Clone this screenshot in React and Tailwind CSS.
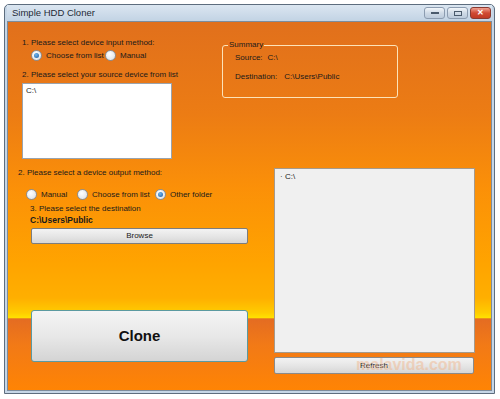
import React from 'react'

const Radio = ({ checked, label, w }) => (
  <div className={`flex items-center gap-[4px] ${w || ''}`}>
    <span className="flex h-[11px] w-[11px] shrink-0 items-center justify-center rounded-full border border-[#8a8f96] bg-[radial-gradient(circle_at_40%_35%,#ffffff,#d8dde2)]">
      {checked && <span className="h-[5px] w-[5px] rounded-full bg-[radial-gradient(circle_at_40%_35%,#6fb7f0,#1c5aa0)]" />}
    </span>
    <span className="whitespace-nowrap">{label}</span>
  </div>
)

const TitleButton = ({ children, close }) => (
  <div
    className={
      close
        ? 'flex h-[12px] w-[21px] items-center justify-center rounded-[3px] border border-[#8a3a30] bg-[linear-gradient(180deg,#f0a090,#d04a32_50%,#c03a24)]'
        : 'flex h-[12px] w-[21px] items-center justify-center rounded-[3px] border border-[#8c9cb0] bg-[linear-gradient(180deg,#f2f6fa,#cfdae6_50%,#bccbdc)]'
    }
  >
    {children}
  </div>
)

const App = () => {
  return (
    <div className="h-[399px] w-[500px] bg-white pl-[4px] pt-[4px] font-['Liberation_Sans',Arial,sans-serif] text-[8px] leading-none text-[#1a1a1a]">
      <div className="flex h-[390px] w-[491px] flex-col rounded-t-[5px] border border-[#5d6d7e] bg-[#c6d6e6] px-[2px] pb-[2px]">
        {/* title bar */}
        <div className="flex h-[16px] items-center justify-between bg-[linear-gradient(180deg,#dbe6f1,#c2d3e4)] pl-[5px] pr-[1px]">
          <span className="text-[9.5px] text-[#1e2a36]">Simple HDD Cloner</span>
          <div className="flex items-center gap-[2px]">
            <TitleButton>
              <span className="h-[2px] w-[8px] bg-[#4a5a6c]" />
            </TitleButton>
            <TitleButton>
              <span className="h-[5px] w-[8px] border border-[#4a5a6c]" />
            </TitleButton>
            <TitleButton close>
              <span className="text-[8px] font-bold text-white">✕</span>
            </TitleButton>
          </div>
        </div>

        {/* client area */}
        <div className="relative flex flex-1 flex-col border border-[#7d8c9c] bg-[linear-gradient(180deg,#e1701c_0%,#ec7c14_25%,#fb9008_45%,#ffa300_65%,#ffaf00_75%,#ffcc00_79%,#ffe300_80.5%,#e46c22_80.6%,#f27a16_88%,#ff8404_100%)]">
          {/* top section */}
          <div className="flex h-[144px] pl-[14px] pt-[17px]">
            <div className="flex w-[200px] flex-col">
              <span>1. Please select device input method:</span>
              <div className="mt-[3px] flex pl-[9px]">
                <Radio checked label="Choose from list" w="w-[74px]" />
                <Radio label="Manual" />
              </div>
              <span className="mt-[10px]">2. Please select your source device from list</span>
              <div className="mt-[4px] h-[76px] w-[150px] border border-[#9aa3ad] bg-white px-[3px] py-[3px]">
                C:\
              </div>
            </div>
            <div className="relative mt-[6px] flex h-[53px] w-[176px] flex-col rounded-[3px] border border-[#fde3b8] pl-[12px] pt-[8px]">
              <span className="absolute left-[5px] top-[-5px] bg-[#e8741a] px-[1px]">Summary</span>
              <div className="flex">
                <span>Source:</span>
                <span className="ml-[5px]">C:\</span>
              </div>
              <div className="mt-[11px] flex">
                <span>Destination:</span>
                <span className="ml-[7px]">C:\Users\Public</span>
              </div>
            </div>
          </div>

          {/* bottom section */}
          <div className="flex flex-1 pl-[10px]">
            <div className="flex w-[256px] flex-col pt-[3px]">
              <span>2. Please select a device output method:</span>
              <div className="mt-[12px] flex pl-[8px]">
                <Radio label="Manual" w="w-[51px]" />
                <Radio label="Choose from list" w="w-[78px]" />
                <Radio checked label="Other folder" />
              </div>
              <span className="mt-[5px] pl-[12px]">3. Please select the destination</span>
              <span className="mt-[3px] pl-[12px] text-[8.5px] font-bold">C:\Users\Public</span>
              <button className="ml-[13px] mt-[3px] h-[16px] w-[217px] rounded-[2px] border border-[#7d7d7d] bg-[linear-gradient(180deg,#f3f3f3,#e6e6e6_50%,#d6d6d6)] text-[8px]">
                Browse
              </button>
              <button className="ml-[13px] mt-[66px] h-[52px] w-[217px] rounded-[3px] border border-[#5b9aa0] bg-[linear-gradient(180deg,#f4f4f4,#e8e8e8_50%,#d4d4d4)] text-[15px] font-bold text-[#111]">
                Clone
              </button>
            </div>
            <div className="flex flex-col pt-[2px]">
              <div className="h-[185px] w-[201px] border border-[#a59a8c] bg-[#f0f0f0] px-[5px] py-[4px]">
                · C:\
              </div>
              <div className="relative mt-[4px]">
                <button className="h-[17px] w-[200px] rounded-[2px] border border-[#8a8a8a] bg-[linear-gradient(180deg,#f3f3f3,#e6e6e6_50%,#d6d6d6)] text-[8px]">
                  Refresh
                </button>
                <span className="pointer-events-none absolute left-[82px] top-[0px] text-[16px] font-bold text-[#f0b890] opacity-50">
                  malavida.com
                </span>
              </div>
            </div>
          </div>
        </div>
      </div>
    </div>
  )
}

export default App
